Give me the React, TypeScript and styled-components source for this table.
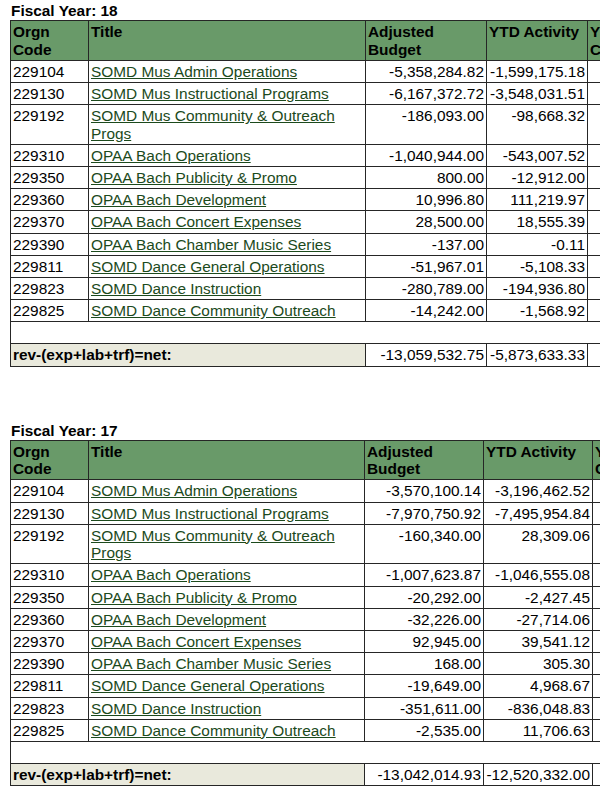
import React from "react";
import styled, { createGlobalStyle } from "styled-components";

const Global = createGlobalStyle`
  html, body { margin: 0; padding: 0; background: #fff; overflow: hidden; }
  body { font-family: "Liberation Sans", Arial, sans-serif; color: #000; }
`;

const Page = styled.div`
  width: 600px;
  overflow: hidden;
  padding: 1px 0 0 10px;
  box-sizing: border-box;
`;

const Section = styled.section<{ $first?: boolean }>`
  margin-top: ${(p) => (p.$first ? "0" : "54px")};
`;

const Heading = styled.div`
  font-size: 15.4px;
  font-weight: bold;
  line-height: 19px;
  padding-left: 1px;
`;

const Table = styled.table`
  border-collapse: collapse;
  table-layout: fixed;
  font-size: 15.4px;
  line-height: 17.5px;
`;

const Col = styled.col<{ $w: number }>`
  width: ${(p) => p.$w}px;
`;

const Th = styled.th`
  background: #699a69;
  border: 1px solid #262626;
  padding: 2px 2px 1.7px 2px;
  text-align: left;
  vertical-align: top;
  font-weight: bold;
  white-space: normal;
`;

const Td = styled.td<{ $num?: boolean }>`
  border: 1px solid #262626;
  padding: 2px 2px 1.7px 2px;
  vertical-align: top;
  text-align: ${(p) => (p.$num ? "right" : "left")};
  white-space: ${(p) => (p.$num ? "nowrap" : "normal")};
`;

const LabelCell = styled(Td)`
  background: #e9e9dc;
  font-weight: bold;
`;

const BlankCell = styled.td`
  border: 1px solid #262626;
  padding: 2px 2px 1.7px 2px;
  height: 17.5px;
`;

const OrgLink = styled.a`
  color: #1c4a1c;
  text-decoration: underline;
`;

type Row = [string, string, string, string];

const fy18: Row[] = [
  ["229104", "SOMD Mus Admin Operations", "-5,358,284.82", "-1,599,175.18"],
  ["229130", "SOMD Mus Instructional Programs", "-6,167,372.72", "-3,548,031.51"],
  ["229192", "SOMD Mus Community & Outreach Progs", "-186,093.00", "-98,668.32"],
  ["229310", "OPAA Bach Operations", "-1,040,944.00", "-543,007.52"],
  ["229350", "OPAA Bach Publicity & Promo", "800.00", "-12,912.00"],
  ["229360", "OPAA Bach Development", "10,996.80", "111,219.97"],
  ["229370", "OPAA Bach Concert Expenses", "28,500.00", "18,555.39"],
  ["229390", "OPAA Bach Chamber Music Series", "-137.00", "-0.11"],
  ["229811", "SOMD Dance General Operations", "-51,967.01", "-5,108.33"],
  ["229823", "SOMD Dance Instruction", "-280,789.00", "-194,936.80"],
  ["229825", "SOMD Dance Community Outreach", "-14,242.00", "-1,568.92"],
];

const fy17: Row[] = [
  ["229104", "SOMD Mus Admin Operations", "-3,570,100.14", "-3,196,462.52"],
  ["229130", "SOMD Mus Instructional Programs", "-7,970,750.92", "-7,495,954.84"],
  ["229192", "SOMD Mus Community & Outreach Progs", "-160,340.00", "28,309.06"],
  ["229310", "OPAA Bach Operations", "-1,007,623.87", "-1,046,555.08"],
  ["229350", "OPAA Bach Publicity & Promo", "-20,292.00", "-2,427.45"],
  ["229360", "OPAA Bach Development", "-32,226.00", "-27,714.06"],
  ["229370", "OPAA Bach Concert Expenses", "92,945.00", "39,541.12"],
  ["229390", "OPAA Bach Chamber Music Series", "168.00", "305.30"],
  ["229811", "SOMD Dance General Operations", "-19,649.00", "4,968.67"],
  ["229823", "SOMD Dance Instruction", "-351,611.00", "-836,048.83"],
  ["229825", "SOMD Dance Community Outreach", "-2,535.00", "11,706.63"],
];

type FY = {
  year: string;
  rows: Row[];
  total: [string, string];
  widths: number[];
};

const years: FY[] = [
  { year: "18", rows: fy18, total: ["-13,059,532.75", "-5,873,633.33"], widths: [78, 277, 121, 101, 120] },
  { year: "17", rows: fy17, total: ["-13,042,014.93", "-12,520,332.00"], widths: [78, 276, 119, 109, 120] },
];

function FiscalTable({ fy, first }: { fy: FY; first?: boolean }) {
  const total = fy.widths.reduce((a, b) => a + b, 0);
  return (
    <Section $first={first}>
      <Heading>Fiscal Year: {fy.year}</Heading>
      <Table style={{ width: total }}>
        <colgroup>
          {fy.widths.map((w, i) => (
            <Col key={i} $w={w} />
          ))}
        </colgroup>
        <thead>
          <tr>
            <Th>Orgn Code</Th>
            <Th>Title</Th>
            <Th>Adjusted Budget</Th>
            <Th>YTD Activity</Th>
            <Th>YTD Commitments</Th>
          </tr>
        </thead>
        <tbody>
          {fy.rows.map((r) => (
            <tr key={r[0]}>
              <Td>{r[0]}</Td>
              <Td>
                <OrgLink href="#">{r[1]}</OrgLink>
              </Td>
              <Td $num>{r[2]}</Td>
              <Td $num>{r[3]}</Td>
              <Td $num></Td>
            </tr>
          ))}
          <tr>
            <BlankCell colSpan={5} />
          </tr>
          <tr>
            <LabelCell colSpan={2}>rev-(exp+lab+trf)=net:</LabelCell>
            <Td $num>{fy.total[0]}</Td>
            <Td $num>{fy.total[1]}</Td>
            <Td $num></Td>
          </tr>
        </tbody>
      </Table>
    </Section>
  );
}

export default function App() {
  return (
    <>
      <Global />
      <Page>
        {years.map((fy, i) => (
          <FiscalTable key={fy.year} fy={fy} first={i === 0} />
        ))}
      </Page>
    </>
  );
}
